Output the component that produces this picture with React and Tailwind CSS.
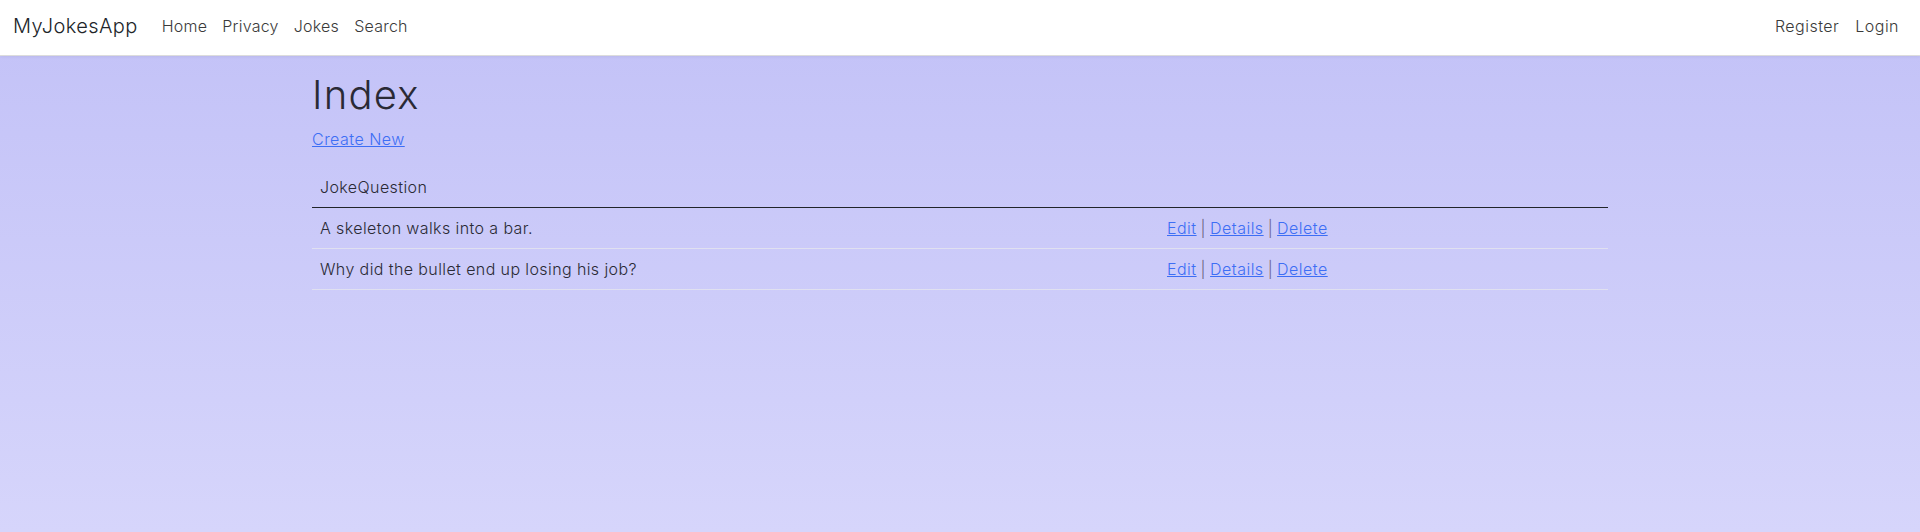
const JOKES = [
  { id: 1, question: 'A skeleton walks into a bar.' },
  { id: 2, question: 'Why did the bullet end up losing his job?' },
]

const NAV_LINKS = ['Home', 'Privacy', 'Jokes', 'Search']

function ActionLinks() {
  return (
    <span>
      <a href="#" className="text-[#3d6ef5] underline">Edit</a>
      <span className="text-[#6b6480] px-[4px]">|</span>
      <a href="#" className="text-[#3d6ef5] underline">Details</a>
      <span className="text-[#6b6480] px-[4px]">|</span>
      <a href="#" className="text-[#3d6ef5] underline">Delete</a>
    </span>
  )
}

export default function App() {
  return (
    <div
      className="min-h-[532px] bg-gradient-to-b from-[#c2c1f7] to-[#d6d5fb] text-[#2a2a35] font-light tracking-[0.025em]"
      style={{ fontFamily: 'Inter, "Noto Sans", sans-serif' }}
    >
      <nav className="h-[56px] bg-white border-b border-[#dcdcdc] shadow-[0_1px_3px_rgba(0,0,0,0.05)] flex items-center px-[13px] pb-[4px]">
        <a href="#" className="text-[20px] text-[#212529] mr-[24px] tracking-[0.02em]">MyJokesApp</a>
        <div className="flex gap-[15px] text-[16px] text-[#3a3a3a] tracking-[0.015em]">
          {NAV_LINKS.map((l) => (
            <a key={l} href="#">{l}</a>
          ))}
        </div>
        <div className="ml-auto flex gap-[16px] text-[16px] text-[#3a3a3a] pr-[8px] tracking-[0.03em]">
          <a href="#">Register</a>
          <a href="#">Login</a>
        </div>
      </nav>

      <main className="w-[1296px] mx-auto mt-[15px]">
        <h1 className="text-[40px] leading-[48px] mb-[8px] font-light tracking-[0.03em]">Index</h1>
        <p className="mb-[16px] leading-[24px] text-[16px] tracking-[0.03em]">
          <a href="#" className="text-[#3d6ef5] underline">Create New</a>
        </p>
        <table className="w-full text-[16px] text-left">
          <thead>
            <tr className="border-b border-[#212529]">
              <th className="font-light px-[8px] py-[8px] leading-[24px] w-[847px]">JokeQuestion</th>
              <th className="px-[8px] py-[8px]"></th>
            </tr>
          </thead>
          <tbody>
            {JOKES.map((j) => (
              <tr key={j.id} className="border-b border-[#e0e0f0]">
                <td className="px-[8px] py-[8px] leading-[24px]">{j.question}</td>
                <td className="px-[8px] py-[8px] leading-[24px] tracking-[0.03em]"><ActionLinks /></td>
              </tr>
            ))}
          </tbody>
        </table>
      </main>
    </div>
  )
}
